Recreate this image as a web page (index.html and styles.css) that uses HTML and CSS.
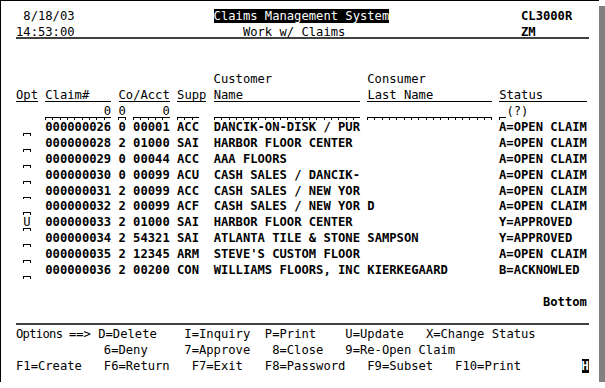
FILE: index.html
```html
<!DOCTYPE html>
<html>
<head>
<meta charset="utf-8">
<link rel="stylesheet" href="styles.css">
</head>
<body>
<div class="screen">
<div class="row"> 8/18/03                   <span class="rev">Claims Management System</span>                  <b>CL3000R</b></div>
<div class="row sep">14:53:00                       Work w/ Claims                        <b>ZM</b></div>
<div class="row"> </div>
<div class="row"> </div>
<div class="row">                           Customer             Consumer</div>
<div class="row"><span class="ul">Opt</span> <span class="ul">Claim#   </span> <span class="ul">Co/Acct</span> <span class="ul">Supp</span> <span class="ul">Name                </span> <span class="ul">Last Name        </span> <span class="ul">Status      </span></div>
<div class="row">    <span class="f">        0</span> <span class="f">0</span> <span class="f">    0</span> <span class="f">   </span>  <span class="f">                    </span> <span class="f">                 </span> <span class="f"> </span>(?)</div>
<div class="row"> <span class="f"> </span>  <b>000000026 0 00001 ACC  DANCIK-ON-DISK / PUR                   A=OPEN CLAIM</b></div>
<div class="row"> <span class="f"> </span>  <b>000000028 2 01000 SAI  HARBOR FLOOR CENTER                    A=OPEN CLAIM</b></div>
<div class="row"> <span class="f"> </span>  <b>000000029 0 00044 ACC  AAA FLOORS                             A=OPEN CLAIM</b></div>
<div class="row"> <span class="f"> </span>  <b>000000030 0 00099 ACU  CASH SALES / DANCIK-                   A=OPEN CLAIM</b></div>
<div class="row"> <span class="f"> </span>  <b>000000031 2 00099 ACC  CASH SALES / NEW YOR                   A=OPEN CLAIM</b></div>
<div class="row"> <span class="f"> </span>  <b>000000032 2 00099 ACF  CASH SALES / NEW YOR D                 A=OPEN CLAIM</b></div>
<div class="row"> <span class="f">U</span>  <b>000000033 2 01000 SAI  HARBOR FLOOR CENTER                    Y=APPROVED</b></div>
<div class="row"> <span class="f"> </span>  <b>000000034 2 54321 SAI  ATLANTA TILE &amp; STONE SAMPSON           Y=APPROVED</b></div>
<div class="row"> <span class="f"> </span>  <b>000000035 2 12345 ARM  STEVE'S CUSTOM FLOOR                   A=OPEN CLAIM</b></div>
<div class="row"> <span class="f"> </span>  <b>000000036 2 00200 CON  WILLIAMS FLOORS, INC KIERKEGAARD       B=ACKNOWLED</b></div>
<div class="row"> </div>
<div class="row">                                                                        <b>Bottom</b></div>
<div class="row sep"> </div>
<div class="row"><span class="lead"><span class="tight">Options </span>==> D=Delete</span>I=Inquiry  P=Print    U=Update   X=Change Status</div>
<div class="row">            6=Deny     7=Approve   8=Close   9=Re-Open Claim</div>
<div class="row">F1=Create   F6=Return   F7=Exit   F8=Password   F9=Subset   F10=Print        <span class="cur">H</span></div>
</div>
</body>
</html>
```

FILE: styles.css
```css
html, body {
  margin: 0;
  padding: 0;
  background: #ffffff;
}

.screen {
  box-sizing: border-box;
  width: 599px;
  height: 382px;
  border-left: 1px solid #000;
  border-top: 1px solid #000;
  background: #ffffff;
  box-shadow: 6px 6px 0 #808080;
  padding: 7.6px 0 0 15px;
  overflow: hidden;
  font-family: "DejaVu Sans Mono", monospace;
  font-size: 12.16px;
  color: #000;
}

.row {
  height: 15.92px;
  line-height: 15.92px;
  white-space: pre;
}

.row b {
  font-weight: bold;
}

.lead {
  display: inline-block;
  vertical-align: top;
  width: 168.36px;
}

.tight {
  letter-spacing: -0.7px;
}

.sep {
  background: linear-gradient(#404040, #404040) no-repeat 0 12px / 573px 2px;
}

.rev {
  background: #000;
  color: #fff;
}

.cur {
  margin-left: 2px;
  background: #000;
  color: #fff;
  font-weight: bold;
}

.ul {
  display: inline-block;
  vertical-align: top;
  height: 15.92px;
  background: linear-gradient(#000, #000) no-repeat 0 13px / 100% 1px;
}

.f {
  display: inline-block;
  vertical-align: top;
  height: 15.92px;
  background:
    linear-gradient(#000, #000) no-repeat 0 13px / 100% 1px,
    repeating-linear-gradient(to right, #000 0 1px, transparent 1px 7.32px) no-repeat 0 13px / 100% 3px;
}
```
